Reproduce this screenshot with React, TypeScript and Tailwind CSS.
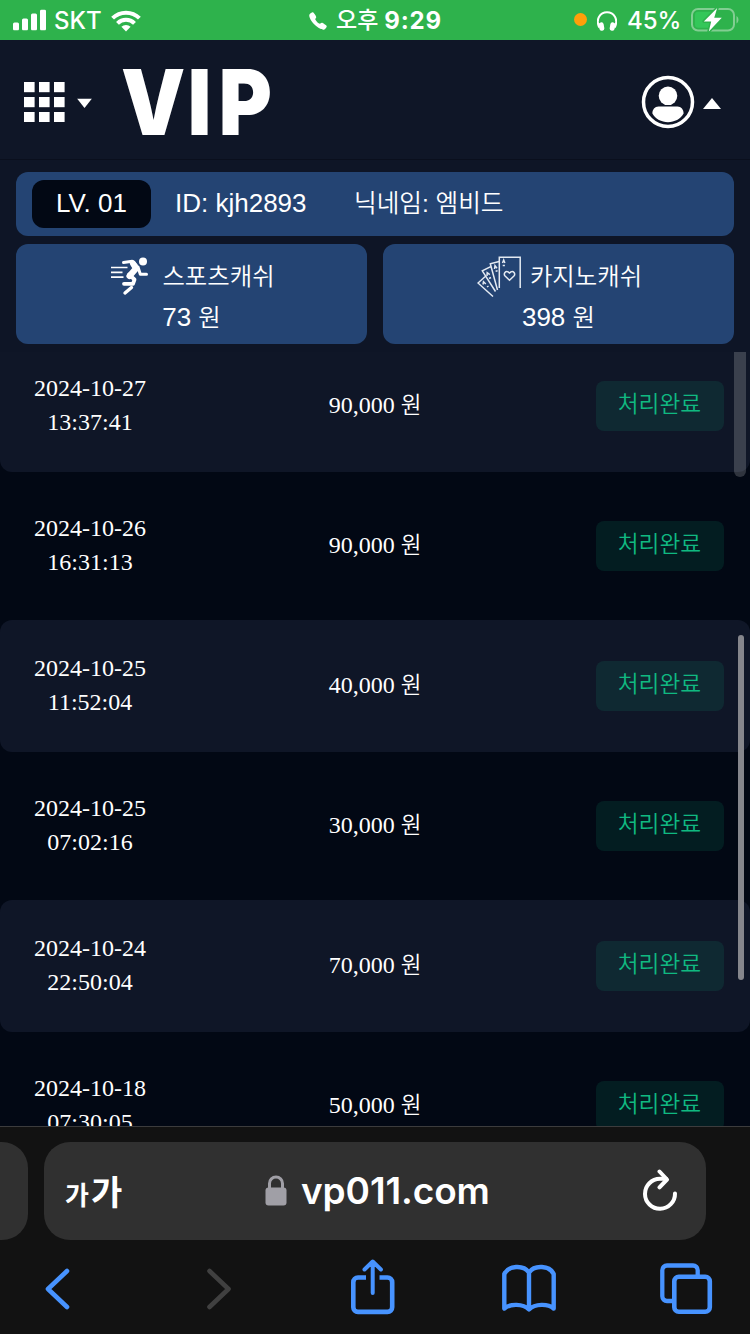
import type { ReactNode } from 'react'
import { IoCall } from 'react-icons/io5'

interface Transaction {
  date: string
  time: string
  amount: string
}

const TRANSACTIONS: Transaction[] = [
  { date: '2024-10-27', time: '13:37:41', amount: '90,000' },
  { date: '2024-10-26', time: '16:31:13', amount: '90,000' },
  { date: '2024-10-25', time: '11:52:04', amount: '40,000' },
  { date: '2024-10-25', time: '07:02:16', amount: '30,000' },
  { date: '2024-10-24', time: '22:50:04', amount: '70,000' },
  { date: '2024-10-18', time: '07:30:05', amount: '50,000' },
]

function SignalIcon() {
  return (
    <svg className="translate-y-[-0.5px]" width="33" height="21" viewBox="0 0 33 21" fill="#fff">
      <rect x="0" y="13" width="6" height="8" rx="1.5" />
      <rect x="9" y="9" width="6" height="12" rx="1.5" />
      <rect x="18" y="4" width="6" height="17" rx="1.5" />
      <rect x="27" y="0" width="6" height="21" rx="1.5" />
    </svg>
  )
}

function WifiIcon() {
  return (
    <svg width="30" height="22" viewBox="0 0 30 22" fill="none" stroke="#fff" strokeWidth="4">
      <path d="M1.6 8.2a19 19 0 0 1 26.8 0" />
      <path d="M6.5 13.4a12 12 0 0 1 17 0" />
      <path d="M15 21.5l-4.6-4.7a6.5 6.5 0 0 1 9.2 0z" fill="#fff" stroke="none" />
    </svg>
  )
}

function HeadphonesIcon() {
  return (
    <svg width="20" height="20" viewBox="0 0 20 20">
      <path d="M2.3 16.5C-1.8 8 3.2 1.2 10 1.2S21.8 8 17.7 16.5" fill="none" stroke="#fff" strokeWidth="2" />
      <rect x="2" y="11.3" width="5" height="8.5" rx="2.4" fill="#fff" transform="rotate(-10 4.5 15.5)" />
      <rect x="13" y="11.3" width="5" height="8.5" rx="2.4" fill="#fff" transform="rotate(10 15.5 15.5)" />
    </svg>
  )
}

function BatteryIcon() {
  return (
    <svg className="-translate-y-px" width="48" height="24" viewBox="0 0 48 24">
      <rect x="1" y="1" width="42" height="21.5" rx="6" fill="none" stroke="#82ce92" strokeWidth="2" />
      <path d="M45.5 8v7.500c2.600-1.400 2.600-6 0-7.500z" fill="#82ce92" />
      <path d="M7 3.8h15v16H7a3 3 0 0 1-3-3v-10a3 3 0 0 1 3-3z" fill="#34c759" />
      <path
        d="M26.200 0L12.800 13.400h7.400L17.800 23.500 30.800 9.800h-7.600z"
        fill="#fff"
        stroke="#2eb24c"
        strokeWidth="3"
        paintOrder="stroke"
        strokeLinejoin="round"
      />
    </svg>
  )
}

function GridIcon() {
  return (
    <svg width="41" height="40" viewBox="0 0 41 40" fill="#fff">
      {[0, 15, 30].map(y =>
        [0, 15, 30].map(x => <rect key={`${x}-${y}`} x={x} y={y} width="10.6" height="10.2" />)
      )}
    </svg>
  )
}

function UserIcon() {
  return (
    <svg width="54" height="54" viewBox="0 0 54 54">
      <circle cx="27" cy="27" r="24.5" fill="none" stroke="#fff" strokeWidth="3.5" />
      <circle cx="27" cy="20.8" r="9.3" fill="#fff" />
      <path d="M17.500 31.600h19c3.600 0 6.300 3.300 6.100 7C39.500 44 33.500 47.300 27 47.300S14.500 44 11.400 38.600c-.2-3.700 2.500-7 6.100-7z" fill="#fff" />
    </svg>
  )
}

function RunnerIcon() {
  return (
    <svg width="43" height="40" viewBox="-1 0 43 40" fill="none" stroke="#fff" strokeLinecap="round" strokeLinejoin="round">
      <circle cx="32" cy="4.5" r="4" fill="#fff" stroke="none" />
      <path d="M0 10.500h16.500M0 15.300h11.500M0 20.200h12.500" strokeWidth="1.7" strokeLinecap="butt" />
      <path d="M12.500 5.600l8.800-1.300 4 4" strokeWidth="3" />
      <path d="M22 6.500l3 5L18.500 19" strokeWidth="6.2" />
      <path d="M27 10l2.300 7.300h6.200" strokeWidth="3" />
      <path d="M18 17.500l5.500 5-1.500 4.300H13" strokeWidth="3.800" />
      <path d="M20.500 30.500l-6.500 5.500" strokeWidth="3.400" />
    </svg>
  )
}

function CardsIcon() {
  return (
    <svg width="44" height="42" viewBox="0 0 44 42" fill="none" stroke="#e4eaf2" strokeWidth="1.5">
      <path d="M22.300 32V1.200h20.900V32" />
      <path d="M20.500 34L13.300 7.700l8.800-2.300M18.500 35.500L5.300 14.900l8.400-4.300M16 40.500L1 27l7.500-6.800" />
      <path d="M32.500 24.200l-4.400-4.100c-2-2.400.6-5.600 3-4.200l1.400 1.200 1.400-1.200c2.400-1.400 5 1.800 3 4.200z" />
      <path d="M25.500 7l1.200-3 1.200 3M25.700 9.500h2.200M17.500 13l.5-3.300 2 2.600M18.600 15.200l2-.5M10 20l.2-3.300 2.600 2M12 22.500l2-1M6 28.500l.5-2.800 2.300 2.300M10 31l1.500-1" />
    </svg>
  )
}

function LockIcon() {
  return (
    <svg className="-translate-y-px" width="22" height="31" viewBox="0 0 22 31">
      <path d="M4.500 14V8.500a6.500 6.500 0 0 1 13 0V14" fill="none" stroke="#a09fa6" strokeWidth="3" />
      <rect x="0.5" y="12.5" width="21" height="18" rx="3" fill="#a09fa6" />
    </svg>
  )
}

function ReloadIcon() {
  return (
    <svg className="-translate-y-px" width="36" height="42" viewBox="0 0 36 42" fill="none" stroke="#fff" strokeWidth="4" strokeLinecap="round" strokeLinejoin="round">
      <path d="M33 24.500A15 15 0 1 1 18 9.800h6" />
      <path d="M17.500 2.500l7.500 8-7.500 7.800" />
    </svg>
  )
}

function ToolbarIcon({ children, muted }: { children: ReactNode; muted?: boolean }) {
  return (
    <svg
      width="56"
      height="56"
      viewBox="0 0 56 56"
      fill="none"
      stroke={muted ? '#404040' : '#4793ff'}
      strokeWidth="4.6"
      strokeLinecap="round"
      strokeLinejoin="round"
    >
      {children}
    </svg>
  )
}

function StatusBar() {
  return (
    <div className="flex h-10 shrink-0 items-center bg-[#2eb24c] pt-px font-['Inter','Noto_Sans_CJK_KR',sans-serif] text-2xl text-white">
      <div className="flex w-[308px] items-center pl-[13px]">
        <SignalIcon />
        <span className="ml-2 w-[57px] font-medium">SKT</span>
        <WifiIcon />
      </div>
      <div className="flex w-[266px] items-center">
        <IoCall className="size-5" />
        <span className="ml-2 text-[23px] font-medium">오후</span>
        <span className="ml-[6px] font-bold tracking-[0.8px]">9:29</span>
      </div>
      <div className="flex items-center">
        <span className="mr-[10px] size-[13px] -translate-y-px rounded-full bg-[#ff9f0a]" />
        <HeadphonesIcon />
        <span className="ml-[10px] w-[64px] font-medium">45%</span>
        <BatteryIcon />
      </div>
    </div>
  )
}

function Header() {
  return (
    <header className="flex h-[120px] shrink-0 items-center border-b border-[#0a0f1d] bg-[#0f1627] pt-[5px] pr-[29px] pl-6 text-white">
      <GridIcon />
      <svg className="ml-3 translate-y-[1.5px]" width="15" height="10" viewBox="0 0 15 10" fill="#fff">
        <path d="M0 0h15L7.500 9.500z" />
      </svg>
      <h1 className="ml-[29px] w-[170px] origin-left scale-x-[0.89] pt-px font-['Inter',sans-serif] text-[91px] leading-none font-black tracking-[2.7px]">
        V<span className="tracking-[8.2px]">I</span>P
      </h1>
      <div className="ml-auto flex items-center gap-2">
        <UserIcon />
        <svg className="translate-y-px" width="18" height="11" viewBox="0 0 18 11" fill="#fff">
          <path d="M0 11h18L9 0z" />
        </svg>
      </div>
    </header>
  )
}

function CashCard({ icon, label, amount }: { icon: ReactNode; label: string; amount: number }) {
  return (
    <div className="h-[100px] flex-1 rounded-xl bg-[#244473] pt-3 text-center leading-[41px]">
      <div className="flex h-[41px] items-center justify-center pl-0.5">
        {icon}
        <span className="ml-[9px] text-[24.4px] font-[350]">{label}</span>
      </div>
      <p>
        {amount} <span className="text-[24.4px] font-[350]">원</span>
      </p>
    </div>
  )
}

function AccountPanel() {
  return (
    <section className="h-48 shrink-0 bg-[#0e1526] px-4 pt-3 font-['Liberation_Sans','Noto_Sans_CJK_KR',sans-serif] text-[26px] text-white">
      <div className="flex h-16 items-center rounded-xl bg-[#244473] pl-4">
        <span className="flex h-12 w-[119px] items-center justify-center rounded-xl bg-[#020814] pb-0.5">LV. 01</span>
        <span className="ml-6 w-[179px] pb-0.5">ID: kjh2893</span>
        <span className="text-[24.6px] font-[350]">닉네임: 엠비드</span>
      </div>
      <div className="mt-2 flex gap-4">
        <CashCard icon={<RunnerIcon />} label="스포츠캐쉬" amount={73} />
        <CashCard icon={<CardsIcon />} label="카지노캐쉬" amount={398} />
      </div>
    </section>
  )
}

function TransactionRow({ date, time, amount }: Transaction) {
  return (
    <li className="flex h-[132px] shrink-0 items-center rounded-xl pr-[26px] odd:bg-[#0f1627]">
      <div className="w-[180px] pb-0.5 text-center leading-[34px]">
        <p>{date}</p>
        <p>{time}</p>
      </div>
      <p className="flex-1 pb-0.5 pl-[14px] text-center">
        {amount} <span className="text-[22.5px] font-[350]">원</span>
      </p>
      <span className="ml-[40px] flex h-[50px] w-32 items-center justify-center rounded-lg bg-[#10b981]/12 pr-px pb-0.5 text-[22.7px] font-[350] text-[#10b981]">
        처리완료
      </span>
    </li>
  )
}

function BrowserBar() {
  return (
    <footer className="h-52 shrink-0 border-t border-[#3c3c3d] bg-[#121212]">
      <div className="flex pt-[15px]">
        <div className="h-[98px] w-7 rounded-r-[26px] bg-[#303030]" />
        <div className="ml-4 flex h-[98px] w-[662px] items-center rounded-[26px] bg-[#303030] pr-7 pl-[21px] text-white">
          <span className="w-[200px] font-['Noto_Sans_CJK_KR',sans-serif] leading-none font-bold">
            <span className="text-[26px]">가</span>
            <span className="ml-[2px] text-[34px]">가</span>
          </span>
          <LockIcon />
          <span className="ml-[14px] font-['Inter',sans-serif] text-[37px] font-semibold tracking-[-0.1px]">vp011.com</span>
          <span className="ml-auto">
            <ReloadIcon />
          </span>
        </div>
      </div>
      <nav className="flex gap-[101px] pt-[19px] pl-[30px]">
        <ToolbarIcon>
          <path d="M37 12L18 30l19 18" />
        </ToolbarIcon>
        <ToolbarIcon muted>
          <path d="M22.500 12l19 18-19 18" />
        </ToolbarIcon>
        <ToolbarIcon>
          <path d="M22 18.500H14a4.700 4.700 0 0 0-4.700 4.700v25a4.700 4.700 0 0 0 4.700 4.700h29.500a4.700 4.700 0 0 0 4.700-4.700v-25a4.700 4.700 0 0 0-4.700-4.700h-8" strokeLinecap="butt" />
          <path d="M28.700 34V3M20.500 10.500l8.200-8 8.200 8" strokeWidth="4" />
        </ToolbarIcon>
        <ToolbarIcon>
          <path d="M28 50.500c-6-6-19-6-24.700-1V15c4-8.500 19-9.500 24.700-1.500 5.700-8 20.700-7 24.700 1.500v34.500C47 44.500 34 44.500 28 50.500v-37" strokeWidth="4.4" />
        </ToolbarIcon>
        <ToolbarIcon>
          <rect x="16.300" y="17.800" width="35.500" height="35" rx="4.500" />
          <path d="M15.500 42H9A4.700 4.700 0 0 1 4.300 37.300V11.200A4.700 4.700 0 0 1 9 6.500h26a4.700 4.700 0 0 1 4.700 4.700v6" strokeWidth="4.300" strokeLinecap="butt" />
        </ToolbarIcon>
      </nav>
    </footer>
  )
}

export default function App() {
  return (
    <div className="flex h-[1334px] w-[750px] flex-col overflow-hidden bg-[#020814]">
      <StatusBar />
      <Header />
      <AccountPanel />
      <main className="relative min-h-0 flex-1 overflow-hidden font-['Liberation_Serif','Noto_Sans_CJK_KR',serif] text-2xl text-white">
        <ul className="-mt-3 flex flex-col gap-2">
          {TRANSACTIONS.map(t => (
            <TransactionRow key={`${t.date} ${t.time}`} {...t} />
          ))}
        </ul>
        {/* list scrollbar, then the page's own */}
        <div className="absolute top-0 right-1 h-[125px] w-3 rounded-b-full bg-white/18" />
        <div className="absolute top-[283px] right-[6px] h-[345px] w-[6px] rounded-full bg-[#85868c]" />
      </main>
      <BrowserBar />
    </div>
  )
}
